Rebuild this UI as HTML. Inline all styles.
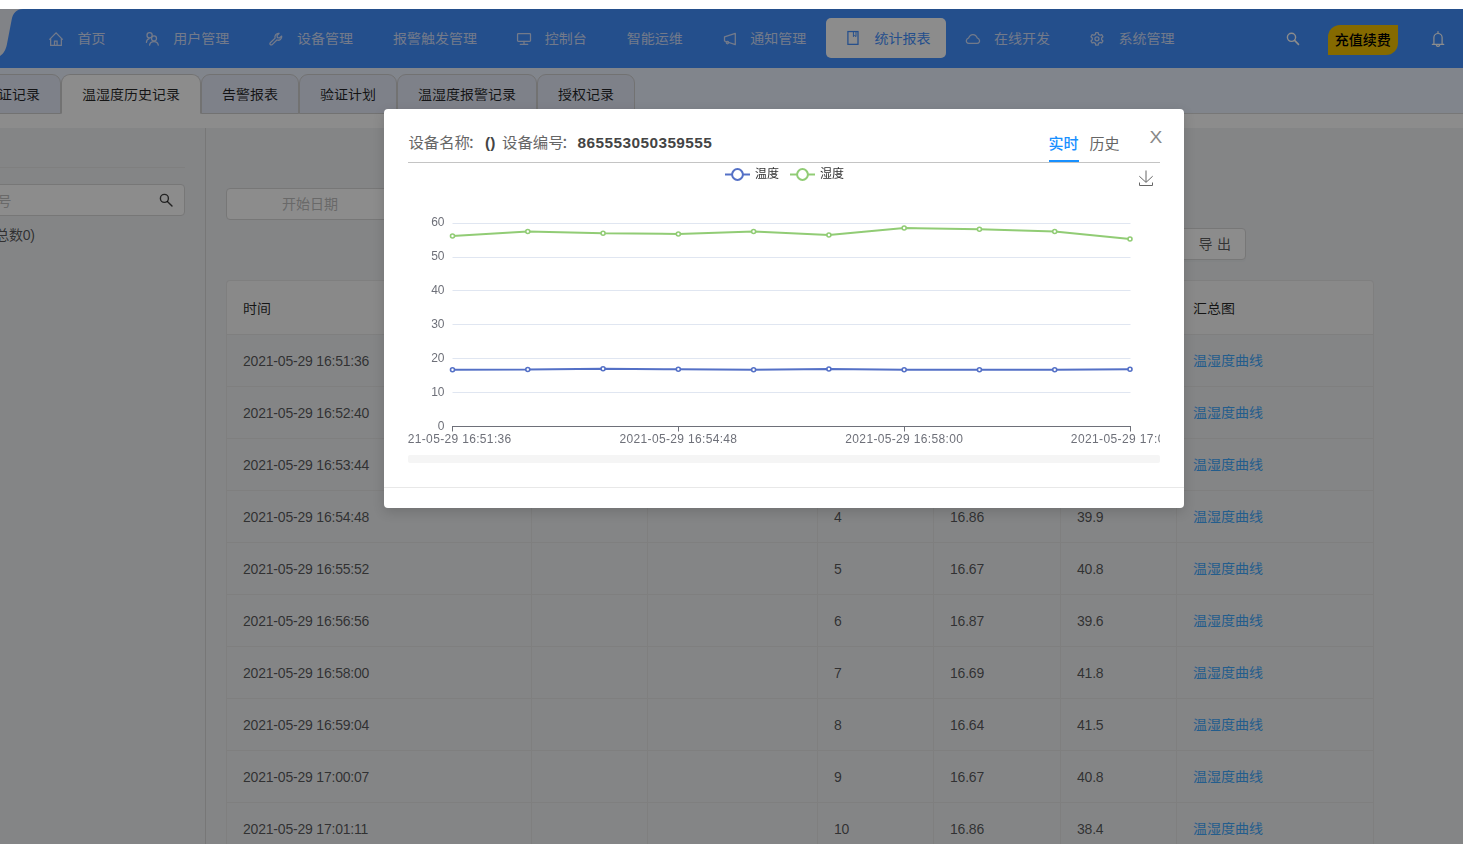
<!DOCTYPE html>
<html lang="zh-CN">
<head>
<meta charset="utf-8">
<title>温湿度历史记录</title>
<style>
*{box-sizing:border-box}
html,body{margin:0;padding:0}
body{width:1463px;height:844px;overflow:hidden;background:#fff;position:relative;font-family:"Liberation Sans","Noto Sans CJK SC",sans-serif;font-size:14px;color:rgba(0,0,0,.65)}
#page{position:absolute;left:0;top:9px;width:1463px;height:835px;overflow:hidden;background:#f0f2f5}
#nav{position:absolute;left:0;top:0;width:1463px;height:59px;background:#eceef6}
#nav .bg{position:absolute;left:0;top:0}
.ntx{position:absolute;top:0;height:59px;line-height:59px;font-size:14px;color:#d2dffc;white-space:nowrap;transform:translateY(.45px) scaleY(.93)}
.ntx.act{color:#4390ff}
.nicons{position:absolute;left:0;top:0}
.nbox{position:absolute;top:9px;height:40px;border-radius:5px;background:#fff}
#recharge{position:absolute;left:1327.5px;top:16px;width:70.5px;height:30px;line-height:30px;text-align:center;background:#f2c100;color:#000;border-radius:12px 0 12px 0;font-size:14px;font-weight:500}
#tabbar{position:absolute;left:0;top:59px;width:1463px;height:46px;background:#ecf2ff;border-bottom:1px solid #d9d9d9}
.tab{position:absolute;top:6px;height:40px;line-height:40px;border:1px solid #d0d0d0;border-radius:9px 9px 0 0;background:#e6ecfa;color:rgba(0,0,0,.85);font-size:14px;text-align:center;white-space:nowrap}
.tab.on{background:#fff;border-bottom-color:#fff}
#band{position:absolute;left:0;top:105px;width:1463px;height:14px;background:#fff}
#side{position:absolute;left:0;top:119px;width:206px;height:716px;border-right:1px solid #d9d9d9}
#side .hr{position:absolute;left:0;top:39px;width:185px;height:1px;background:#e8e8e8}
#side .inp{position:absolute;left:-60px;top:56px;width:245px;height:32px;border:1px solid #d9d9d9;border-radius:4px;background:#fff;color:#bfbfbf;line-height:32px;padding-left:14.5px}
#side .cnt{letter-spacing:-.3px;position:absolute;left:-9px;top:96px;line-height:22px;color:rgba(0,0,0,.65)}
#date{position:absolute;left:226px;top:179px;width:400px;height:32px;border:1px solid #d9d9d9;border-radius:4px;background:#fff;color:#bfbfbf;line-height:30px}
#date span{position:absolute;left:55px;top:0}
#export{position:absolute;left:1180px;top:219px;width:65.5px;height:32px;border:1px solid #d9d9d9;border-radius:4px;background:#fff;color:rgba(0,0,0,.65);line-height:31px;padding-left:17.5px;word-spacing:.5px;white-space:pre;box-shadow:0 2px 0 rgba(0,0,0,.015)}
table{position:absolute;left:226px;top:271px;border-collapse:separate;border-spacing:0;table-layout:fixed;width:1148px;border-top:1px solid #e8e8e8;border-left:1px solid #e8e8e8;border-radius:4px 4px 0 0}
th,td{border-right:1px solid #e8e8e8;border-bottom:1px solid #e8e8e8;padding:0 16px;text-align:left;font-weight:normal;white-space:nowrap;overflow:hidden}
th{height:54px;background:#fafafa;color:rgba(0,0,0,.85);font-weight:normal;padding-bottom:2px}
td{height:52px;color:rgba(0,0,0,.65);letter-spacing:-0.2px;padding-top:1px}
td a{letter-spacing:0;position:relative;top:-1px;display:inline-block;transform:translateY(-.7px) scaleY(.93)}
td a{color:#40a9ff}
th:first-child{border-top-left-radius:4px}
th:last-child{border-top-right-radius:4px}
#mask{position:absolute;left:0;top:9px;width:1463px;height:835px;background:rgba(0,0,0,.45)}
#modal{position:absolute;left:384px;top:109px;width:800px;height:399px;background:#fff;border-radius:4px;box-shadow:0 4px 12px rgba(0,0,0,.15)}
#modal .ttl{position:absolute;top:23px;height:24px;line-height:24px;font-size:15.4px;color:#666;white-space:nowrap}
#modal b.ttl{color:#444;font-weight:bold;top:22px}
#modal b.num{letter-spacing:.42px}
.cj{display:inline-block;transform:scaleY(.93)}
.tab .cj{transform:translateY(-.8px) scaleY(.93)}
#modal span.ttl{transform:translateY(-.5px) scaleY(.93)}
#modal .ttl i{font-style:normal;position:relative;left:-2.5px}
#modal .hline{position:absolute;left:24px;top:53px;width:752px;height:1px;background:#c4c4c4}
#modal .t1{position:absolute;left:664.5px;top:23px;height:24px;line-height:24px;font-size:15px;color:#1890ff;font-weight:500}
#modal .t1u{position:absolute;left:665px;top:51px;width:30px;height:2px;background:#1890ff}
#modal .t2{position:absolute;left:705.5px;top:23px;height:24px;line-height:24px;font-size:15px;color:#666}
#modal .x{position:absolute;left:766px;top:18px;width:12px;height:20px;line-height:20px;font-size:16.5px;color:#888;text-align:center;transform:scaleX(1.16)}
#modal .chart{position:absolute;left:24px;top:54px;will-change:transform}
#modal .foot{position:absolute;left:0;top:378px;width:800px;height:1px;background:#e8e8e8}
.ax{font-family:"Liberation Sans","Noto Sans CJK SC",sans-serif;font-size:12px;fill:#6e7079}
.lg{font-family:"Liberation Sans","Noto Sans CJK SC",sans-serif;font-size:12px;fill:#333}
</style>
</head>
<body>
<div id="page">
<div id="nav">
<svg class="bg" width="1463" height="59" viewBox="0 0 1463 59"><path d="M23 0C16.5 0 12.8 4.2 11.7 10.5L6.9 35.5C5.9 40.5 3.6 45 0 46.9V59H1463V0Z" fill="#4390ff"/></svg>
<div class="nbox" style="left:826px;width:120px"></div><span class="ntx" style="left:77.5px">首页</span><span class="ntx" style="left:173.25px">用户管理</span><span class="ntx" style="left:297px">设备管理</span><span class="ntx" style="left:393px">报警触发管理</span><span class="ntx" style="left:544.75px">控制台</span><span class="ntx" style="left:626.75px">智能运维</span><span class="ntx" style="left:750.25px">通知管理</span><span class="ntx act" style="left:874.5px">统计报表</span><span class="ntx" style="left:994px">在线开发</span><span class="ntx" style="left:1118.5px">系统管理</span>
<svg class="nicons" width="1463" height="59" viewBox="0 9 1463 59">
<g fill="none" stroke="#d2dffc" stroke-width="1.25" stroke-linejoin="round" stroke-linecap="round">
<path d="M49.4 39.6L56.05 32.9L62.7 39.6M50.65 38.6V45.35H61.35V38.6M54.5 45.35V41H57.1V45.35" stroke-linejoin="miter" stroke-linecap="butt"/>
<circle cx="149.6" cy="35.3" r="2.6"/><circle cx="154" cy="38.4" r="2.5"/>
<path d="M146.4 42.4C146.6 40.4 147.6 39.2 149.2 38.7M149.6 45.1C149.9 42.8 151.5 41.5 154 41.5C156.5 41.5 157.9 42.8 158.3 45.1"/>
<path d="M281.7 36.1a3.6 3.6 0 0 1-4.8 3.9L272.2 44.6a1.1 1.1 0 0 1-1.9-1.9l4.8-4.6A3.6 3.6 0 0 1 279.1 33.4L277 35.6l0.4 2 2 0.4z"/>
<rect x="517.55" y="33.6" width="12.95" height="7.8" rx="0.8"/><path d="M524 41.4V44.2M520.3 44.4H527.7"/>
<path d="M724.5 36.9L735.3 33.4V44.7L724.5 41Z"/><circle cx="727.4" cy="42.6" r="1.2"/>
<path d="M968.8 43.3C966.9 43.3 966.1 41.7 966.4 40.4C966.7 39.2 967.5 38.4 968.6 38C969.5 35.6 971 34.55 972.95 34.55C974.9 34.55 976.4 35.6 977.3 38C978.4 38.4 979.2 39.2 979.5 40.4C979.8 41.7 979 43.3 977.1 43.3Z"/>
<path d="M1098.50 34.36 L1098.16 32.62 L1095.74 32.62 L1095.40 34.36 L1093.83 35.27 L1092.16 34.68 L1090.95 36.78 L1092.29 37.94 L1092.29 39.76 L1090.95 40.92 L1092.16 43.02 L1093.83 42.43 L1095.40 43.34 L1095.74 45.08 L1098.16 45.08 L1098.50 43.34 L1100.07 42.43 L1101.74 43.02 L1102.95 40.92 L1101.61 39.76 L1101.61 37.94 L1102.95 36.78 L1101.74 34.68 L1100.07 35.27Z"/><circle cx="1096.95" cy="38.85" r="2"/>
</g>
<g fill="none" stroke="#4390ff">
<rect x="847.9" y="31.55" width="10.1" height="12.8" stroke-width="1.25"/>
<path d="M853.4 31.6V36.6L854.7 35.5L856 36.6V31.6" stroke-width="1"/>
</g>
<g fill="none" stroke="#fff" stroke-linecap="round">
<circle cx="1291.5" cy="37.3" r="4.1" stroke-width="1.4"/><path d="M1294.6 40.4L1298.5 44.4" stroke-width="1.6"/>
<path d="M1433.9 44.3V37.6A4.1 4.1 0 0 1 1442.1 37.6V44.3M1432.3 44.3H1443.8M1436.4 45.2A1.7 1.7 0 0 0 1439.6 45.2M1438 31.5V33.2" stroke-width="1.2"/>
</g>
</svg>
<div id="recharge">充值续费</div>
</div>
<div id="tabbar">
<div class="tab" style="left:-37px;width:98px"><span class="cj">验证记录</span></div>
<div class="tab on" style="left:61px;width:140px"><span class="cj">温湿度历史记录</span></div>
<div class="tab" style="left:201px;width:98px"><span class="cj">告警报表</span></div>
<div class="tab" style="left:299px;width:98px"><span class="cj">验证计划</span></div>
<div class="tab" style="left:397px;width:140px"><span class="cj">温湿度报警记录</span></div>
<div class="tab" style="left:537px;width:98px"><span class="cj">授权记录</span></div>
</div>
<div id="band"></div>
<div id="side">
<div class="hr"></div>
<div class="inp">设备编号<svg style="position:absolute;right:11px;top:8px" width="14" height="14" viewBox="0 0 14 14" fill="none" stroke="rgba(0,0,0,.75)" stroke-width="1.4"><circle cx="5.4" cy="5.4" r="4"/><path d="M8.4 8.4L13 13" stroke-linecap="round"/></svg></div>
<div class="cnt">(总数0)</div>
</div>
<div id="date"><span>开始日期</span></div>
<div id="export">导 出</div>
<table>
<colgroup><col style="width:305px"><col style="width:116px"><col style="width:170px"><col style="width:116px"><col style="width:127px"><col style="width:116px"><col style="width:197px"></colgroup>
<thead><tr><th><span class="cj">时间</span></th><th></th><th></th><th></th><th></th><th></th><th><span class="cj">汇总图</span></th></tr></thead>
<tbody>
<tr><td>2021-05-29 16:51:36</td><td></td><td></td><td></td><td></td><td></td><td><a>温湿度曲线</a></td></tr>
<tr><td>2021-05-29 16:52:40</td><td></td><td></td><td></td><td></td><td></td><td><a>温湿度曲线</a></td></tr>
<tr><td>2021-05-29 16:53:44</td><td></td><td></td><td></td><td></td><td></td><td><a>温湿度曲线</a></td></tr>
<tr><td>2021-05-29 16:54:48</td><td></td><td></td><td>4</td><td>16.86</td><td>39.9</td><td><a>温湿度曲线</a></td></tr>
<tr><td>2021-05-29 16:55:52</td><td></td><td></td><td>5</td><td>16.67</td><td>40.8</td><td><a>温湿度曲线</a></td></tr>
<tr><td>2021-05-29 16:56:56</td><td></td><td></td><td>6</td><td>16.87</td><td>39.6</td><td><a>温湿度曲线</a></td></tr>
<tr><td>2021-05-29 16:58:00</td><td></td><td></td><td>7</td><td>16.69</td><td>41.8</td><td><a>温湿度曲线</a></td></tr>
<tr><td>2021-05-29 16:59:04</td><td></td><td></td><td>8</td><td>16.64</td><td>41.5</td><td><a>温湿度曲线</a></td></tr>
<tr><td>2021-05-29 17:00:07</td><td></td><td></td><td>9</td><td>16.67</td><td>40.8</td><td><a>温湿度曲线</a></td></tr>
<tr><td>2021-05-29 17:01:11</td><td></td><td></td><td>10</td><td>16.86</td><td>38.4</td><td><a>温湿度曲线</a></td></tr>
</tbody>
</table>
</div>
<div id="mask"></div>
<div id="modal">
<span class="ttl" style="left:24.4px">设备名称<i>：</i></span><b class="ttl" style="left:101px">()</b><span class="ttl" style="left:118px">设备编号<i>：</i></span><b class="ttl num" style="left:193.6px">865553050359555</b>
<div class="t1">实时</div><div class="t1u"></div>
<div class="t2">历史</div>
<div class="x">X</div>
<div class="hline"></div>
<svg class="chart" width="752" height="304" viewBox="0 0 752 304">
<g><line x1="44.5" y1="60.5" x2="722.5" y2="60.5" stroke="#e0e6f1" stroke-width="1"/><line x1="44.5" y1="94.5" x2="722.5" y2="94.5" stroke="#e0e6f1" stroke-width="1"/><line x1="44.5" y1="127.5" x2="722.5" y2="127.5" stroke="#e0e6f1" stroke-width="1"/><line x1="44.5" y1="161.5" x2="722.5" y2="161.5" stroke="#e0e6f1" stroke-width="1"/><line x1="44.5" y1="195.5" x2="722.5" y2="195.5" stroke="#e0e6f1" stroke-width="1"/><line x1="44.5" y1="229.5" x2="722.5" y2="229.5" stroke="#e0e6f1" stroke-width="1"/></g>
<line x1="44" y1="263.5" x2="723" y2="263.5" stroke="#6e7079" stroke-width="1"/>
<g><line x1="44.5" y1="263.5" x2="44.5" y2="268.5" stroke="#6e7079" stroke-width="1"/><line x1="270.5" y1="263.5" x2="270.5" y2="268.5" stroke="#6e7079" stroke-width="1"/><line x1="496.5" y1="263.5" x2="496.5" y2="268.5" stroke="#6e7079" stroke-width="1"/><line x1="722.5" y1="263.5" x2="722.5" y2="268.5" stroke="#6e7079" stroke-width="1"/></g>
<g><text x="36.5" y="63.40" text-anchor="end" class="ax">60</text><text x="36.5" y="97.30" text-anchor="end" class="ax">50</text><text x="36.5" y="131.20" text-anchor="end" class="ax">40</text><text x="36.5" y="165.10" text-anchor="end" class="ax">30</text><text x="36.5" y="199.00" text-anchor="end" class="ax">20</text><text x="36.5" y="232.90" text-anchor="end" class="ax">10</text><text x="36.5" y="266.80" text-anchor="end" class="ax">0</text></g>
<g><text x="44.5" y="280.0" text-anchor="middle" class="ax" textLength="117.5" lengthAdjust="spacing">2021-05-29 16:51:36</text><text x="270.3" y="280.0" text-anchor="middle" class="ax" textLength="117.5" lengthAdjust="spacing">2021-05-29 16:54:48</text><text x="496.1" y="280.0" text-anchor="middle" class="ax" textLength="117.5" lengthAdjust="spacing">2021-05-29 16:58:00</text><text x="721.6" y="280.0" text-anchor="middle" class="ax" textLength="117.5" lengthAdjust="spacing">2021-05-29 17:01:11</text></g>
<polyline points="44.50,206.75 119.78,206.50 195.06,205.75 270.33,206.25 345.61,206.75 420.89,206.00 496.17,206.75 571.44,206.75 646.72,206.75 722.00,206.25" fill="none" stroke="#5470c6" stroke-width="2" stroke-linejoin="bevel"/>
<g><circle cx="44.50" cy="206.75" r="2" fill="#fff" stroke="#5470c6" stroke-width="1.6"/><circle cx="119.78" cy="206.50" r="2" fill="#fff" stroke="#5470c6" stroke-width="1.6"/><circle cx="195.06" cy="205.75" r="2" fill="#fff" stroke="#5470c6" stroke-width="1.6"/><circle cx="270.33" cy="206.25" r="2" fill="#fff" stroke="#5470c6" stroke-width="1.6"/><circle cx="345.61" cy="206.75" r="2" fill="#fff" stroke="#5470c6" stroke-width="1.6"/><circle cx="420.89" cy="206.00" r="2" fill="#fff" stroke="#5470c6" stroke-width="1.6"/><circle cx="496.17" cy="206.75" r="2" fill="#fff" stroke="#5470c6" stroke-width="1.6"/><circle cx="571.44" cy="206.75" r="2" fill="#fff" stroke="#5470c6" stroke-width="1.6"/><circle cx="646.72" cy="206.75" r="2" fill="#fff" stroke="#5470c6" stroke-width="1.6"/><circle cx="722.00" cy="206.25" r="2" fill="#fff" stroke="#5470c6" stroke-width="1.6"/></g>
<polyline points="44.50,73.00 119.78,68.50 195.06,70.25 270.33,71.00 345.61,68.50 420.89,72.00 496.17,65.00 571.44,66.25 646.72,68.50 722.00,76.00" fill="none" stroke="#91cc75" stroke-width="2" stroke-linejoin="bevel"/>
<g><circle cx="44.50" cy="73.00" r="2" fill="#fff" stroke="#91cc75" stroke-width="1.6"/><circle cx="119.78" cy="68.50" r="2" fill="#fff" stroke="#91cc75" stroke-width="1.6"/><circle cx="195.06" cy="70.25" r="2" fill="#fff" stroke="#91cc75" stroke-width="1.6"/><circle cx="270.33" cy="71.00" r="2" fill="#fff" stroke="#91cc75" stroke-width="1.6"/><circle cx="345.61" cy="68.50" r="2" fill="#fff" stroke="#91cc75" stroke-width="1.6"/><circle cx="420.89" cy="72.00" r="2" fill="#fff" stroke="#91cc75" stroke-width="1.6"/><circle cx="496.17" cy="65.00" r="2" fill="#fff" stroke="#91cc75" stroke-width="1.6"/><circle cx="571.44" cy="66.25" r="2" fill="#fff" stroke="#91cc75" stroke-width="1.6"/><circle cx="646.72" cy="68.50" r="2" fill="#fff" stroke="#91cc75" stroke-width="1.6"/><circle cx="722.00" cy="76.00" r="2" fill="#fff" stroke="#91cc75" stroke-width="1.6"/></g>
<g>
<line x1="317" y1="11.5" x2="342" y2="11.5" stroke="#5470c6" stroke-width="2"/>
<circle cx="329.5" cy="11.5" r="5.4" fill="#fff" stroke="#5470c6" stroke-width="2"/>
<text x="347" y="15" class="lg">温度</text>
<line x1="382" y1="11.5" x2="407" y2="11.5" stroke="#91cc75" stroke-width="2"/>
<circle cx="394.5" cy="11.5" r="5.4" fill="#fff" stroke="#91cc75" stroke-width="2"/>
<text x="412" y="15" class="lg">湿度</text>
</g>
<g fill="none" stroke="#666" stroke-width="1" stroke-linecap="butt">
<path d="M738 7.5V19M731.3 13.199999999999989L738 19.400000000000006L744.7 13.199999999999989M731.5 19.5V22.5H744.5V19.5"/>
</g>
<rect x="0" y="292" width="752" height="8" rx="2" fill="#f5f5f5"/>
</svg>
<div class="foot"></div>
</div>
</body>
</html>
